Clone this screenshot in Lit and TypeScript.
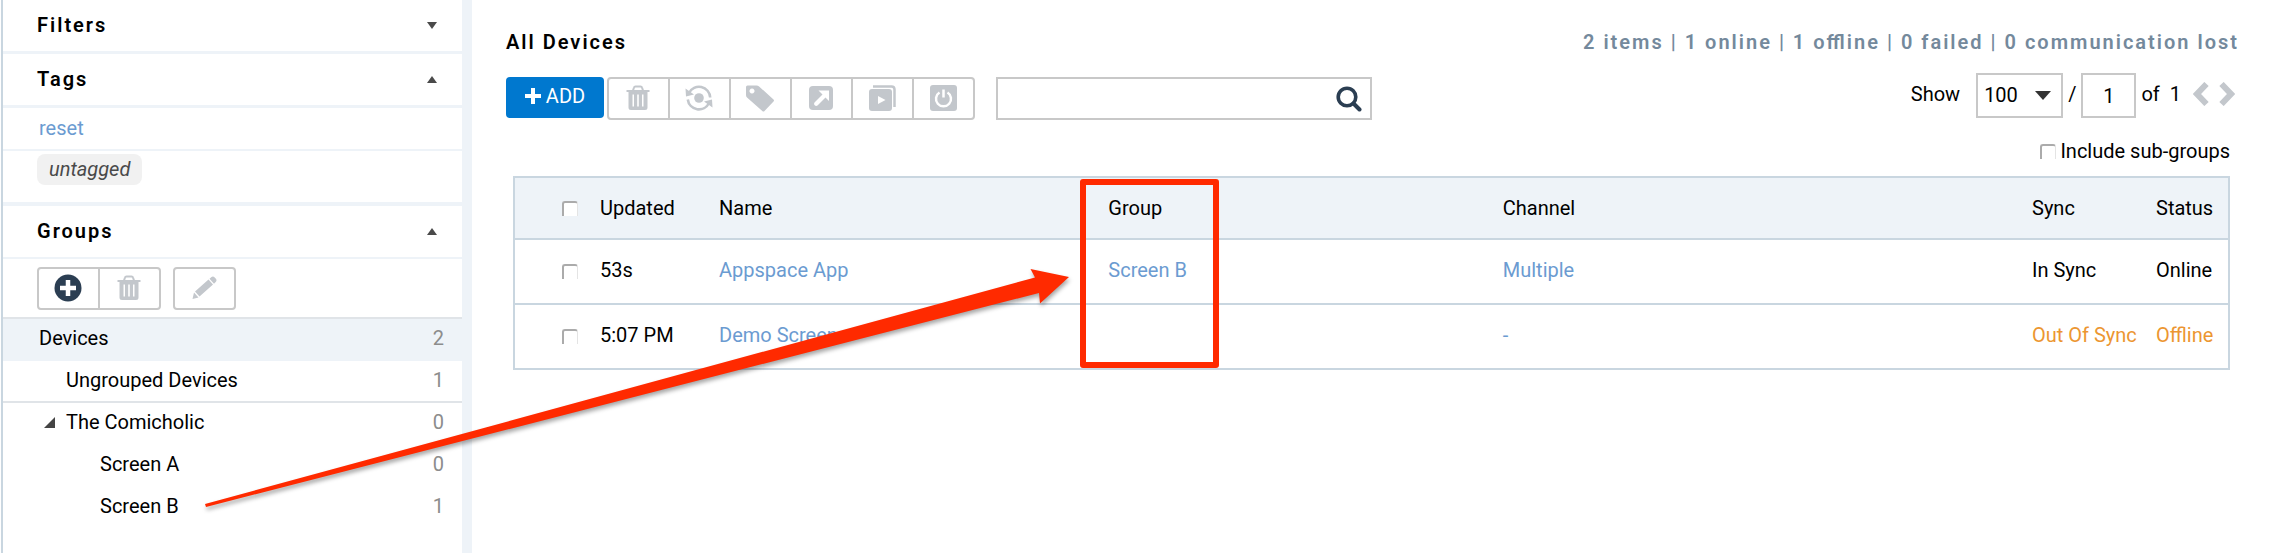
import { LitElement, html, css, svg } from "lit";
import { customElement, state } from "lit/decorators.js";

interface Device { updated: string; name: string; group: string; channel: string; sync: string; status: string; warn: boolean; }

const devices: Device[] = [
  { updated: "53s", name: "Appspace App", group: "Screen B", channel: "Multiple", sync: "In Sync", status: "Online", warn: false },
  { updated: "5:07 PM", name: "Demo Screen", group: "", channel: "-", sync: "Out Of Sync", status: "Offline", warn: true },
];

const trash = svg`<path d="M0.5 5h23v2h-23z"/><path d="M7 5.500 8 2.500Q8.300 1.500 9.500 1.500h5q1.200 0 1.500 1l1 3" fill="none" stroke="currentColor" stroke-width="2"/>
  <path fill-rule="evenodd" d="M2.500 6h19v16.500q0 2.500-2.500 2.500h-14q-2.500 0-2.500-2.500zM6.500 9.500v12h1.500v-12zM11.200 9.500v12h1.600v-12zM16 9.500v12h1.500v-12z"/>`;

const icons: Record<string, unknown> = {
  trash: html`<svg class="icon" width="24" height="26" viewBox="0 0 24 26" fill="currentColor">${trash}</svg>`,
  sync: html`<svg class="icon" width="28" height="26" viewBox="0 0 28 26" fill="none" stroke="currentColor" stroke-width="2.600">
    <circle cx="14" cy="13" r="4.800" fill="currentColor" stroke="none"/>
    <path d="M4 8A11.200 11.200 0 0 1 25.200 12.500M24 18A11.200 11.200 0 0 1 2.800 14.500"/>
    <path d="M.5 3.500 1 11.500 9 9.500zM27.500 22.500 27 14.500 19 16.500z" fill="currentColor" stroke="none"/></svg>`,
  tag: html`<svg class="icon" width="28" height="27" viewBox="0 0 28 27" fill="currentColor">
    <path fill-rule="evenodd" d="M0 2Q0 .5 1.500.5h9q1.500 0 2.600 1L27.500 14.500q1 1 0 2L18.500 26q-1 1-2.200 0L1 12.500Q0 11.500 0 10zM6 3.500a2.500 2.500 0 1 0 .01 0z"/></svg>`,
  open: html`<svg class="icon" width="24" height="24" viewBox="0 0 24 24"><rect width="24" height="24" rx="4" fill="currentColor"/>
    <path d="M9.500 4.500H20V15l-3.500-3.500-8 8q-1.500 1-2.800-.2t-.2-2.800l8-8z" fill="#fff"/></svg>`,
  play: html`<svg class="icon" width="27" height="26" viewBox="0 0 27 26" fill="currentColor">
    <rect y="4" width="23" height="22" rx="3"/><path d="M4 1.500h18.500q3 0 3 3V22" fill="none" stroke="currentColor" stroke-width="2.500"/><path d="M9 11v8l7.500-4z" fill="#fff"/></svg>`,
  power: html`<svg class="icon" width="27" height="26" viewBox="0 0 27 26"><rect width="27" height="26" rx="3" fill="currentColor"/>
    <path d="M9.500 7.500a7.500 7.500 0 1 0 8 0M13.500 4.500v8" fill="none" stroke="#fff" stroke-width="2.500"/></svg>`,
  pencil: html`<svg class="icon" width="25" height="24" viewBox="0 0 25 24" fill="currentColor">
    <path d="M.5 23 2 16.500 6.500 21.500zM3 15.500 16.500 3.500 21 8.500 7.500 20.500zM17.500 2.800 19.500 1q1.700-1 3.200.5l1.200 1.200q1.200 1.700 0 3L22 7.700z"/></svg>`,
  plus: html`<svg class="icon" width="28" height="28" viewBox="0 0 28 28"><circle cx="14" cy="14" r="13.500" fill="#2b3e52"/><path d="M14 6v16M6 14h16" stroke="#fff" stroke-width="4.500"/></svg>`,
};

@customElement("app-root")
export class AppRoot extends LitElement {
  @state() private tagsOpen = true;

  static styles = css`
    :host { display: block; min-height: 100vh; position: relative; overflow: hidden; background: #fff; color: #000;
      font: 20px/24px Roboto, sans-serif; }
    *, *::before { box-sizing: border-box; }
    button, input, select { font: inherit; color: inherit; margin: 0; padding: 0; }
    button { border: 0; background: none; display: flex; align-items: center; justify-content: center; cursor: pointer; }
    a { color: #6b9bd1; text-decoration: none; }
    h1 { margin: 0; font: inherit; }
    .icon { display: block; flex: none; }
    .shell { display: flex; min-height: 100vh; padding-left: 1px; }
    .sidebar { flex: none; width: 471px; border-left: 2px solid #c9d6e0; border-right: 10px solid #eef3f8; }
    .section { width: 100%; height: 54px; padding: 0 25px 1px 34px; border-bottom: 3px solid #eef3f8; justify-content: space-between;
      font-weight: 600; letter-spacing: 2px; }
    .section.groups { height: 53px; border-bottom-width: 2px; }
    .reset { display: block; height: 43px; padding: 8px 36px; border-bottom: 2px solid #eef3f8; }
    .tags { height: 55px; padding: 3px 34px; border-bottom: 4px solid #eef3f8; }
    .chip { display: inline-block; height: 31px; padding: 3px 12px; border-radius: 8px; background: #f1f1f1; color: #4a4a4a; font-style: italic; }
    .tools { display: flex; gap: 12px; padding: 8px 34px 7px; border-bottom: 2px solid #e0e4e8; }
    .group { display: flex; height: 43px; border: 2px solid #c8c8c8; border-radius: 4px; color: #c3c7cc; }
    .group button { width: 61px; padding: 0 1px 1px 0; border-left: 2px solid #c8c8c8; }
    .group button:first-child { width: 59px; border-left: 0; }
    .tree { list-style: none; margin: 0; padding: 0; }
    .node { display: flex; align-items: center; height: 42px; padding: 0 18px 4px 36px; }
    .node .count { margin-left: auto; color: #8c8c8c; }
    .node.selected { background: #eef3f8; }
    .node.ungrouped { padding-left: 63px; border-bottom: 2px solid #e0e4e8; padding-bottom: 2px; }
    .node.parent { padding-left: 41px; gap: 11px; }
    .node.leaf { padding-left: 97px; }
    .main { flex: 1; min-width: 0; padding: 30px 41px 0 34px; }
    .top, .bar { display: flex; justify-content: space-between; }
    .title, .summary { font-weight: 600; letter-spacing: 2px; }
    .summary { color: #74899c; font-feature-settings: "liga"; }
    .bar { margin-top: 19px; }
    .actions { display: flex; padding-top: 4px; align-items: flex-start; }
    .add { width: 98px; height: 41px; gap: 5px; padding-bottom: 4px; margin-right: 3px; border-radius: 4px; background: #0078cf; color: #fff; }
    .search { display: flex; align-items: center; width: 376px; height: 43px; margin-left: 21px; border: 2px solid #c8c8c8; padding-right: 8px; }
    .search input { flex: 1; min-width: 0; height: 100%; border: 0; outline: 0; padding: 0 8px; background: none; }
    .pager { display: flex; align-items: center; height: 45px; padding-right: 4px; }
    .pager label { margin: 0 16px 4px 0; }
    .pager .text { margin: 0 5px 4px; }
    .pager .of { display: flex; gap: 10px; margin-right: 12px; }
    .pick { display: grid; }
    .pick select, .pick svg { grid-area: 1 / 1; }
    .pick svg { align-self: center; justify-self: end; margin-right: 12px; pointer-events: none; }
    .pick select { appearance: none; width: 87px; height: 45px; padding: 0 6px 2px; border: 2px solid #c8c8c8; border-radius: 0; background: #fff; }
    .page { width: 55px; height: 45px; border: 2px solid #c8c8c8; text-align: center; }
    .step { color: #c3c7cc; padding-bottom: 3px; }
    .step + .step { margin-left: 10px; }
    .sub { display: flex; justify-content: flex-end; align-items: center; gap: 4px; padding: 19px 9px 13px 0; }
    .box { appearance: none; display: block; width: 16px; height: 15px; border: solid #ababab; border-width: 2px 0 0 2px; border-right: 1px solid #e4e4e4;
      border-radius: 3px 3px 0 0; background: #fff; }
    .devices { width: calc(100% - 16px); margin-left: 7px; table-layout: fixed; border-collapse: collapse; border: 2px solid #c9d6e0; }
    .devices th, .devices td { height: 65px; padding: 0 0 4px; text-align: left; font-weight: 400; border-top: 2px solid #c9d6e0; white-space: nowrap; }
    .devices th { height: 62px; padding: 0; background: #eef3f8; }
    .devices .box { margin: 4px 0 0 47px; }
    .devices th .box { margin-top: 0; }
    .c-check { width: 86px; } .c-updated { width: 119px; } .c-name { width: 22.7%; } .c-group { width: 23%; } .c-sync { width: 124px; } .c-status { width: 73px; }
    .warn { color: #ec9631; }
    .markup { position: absolute; top: 0; left: 0; pointer-events: none; filter: drop-shadow(1px 3px 2px rgb(0 0 0 / 35%)); }
    .frame { position: absolute; left: 1080px; top: 179px; width: 139px; height: 189px; border: 6px solid #ff2a00; border-radius: 3px; pointer-events: none; }
  `;

  private arrow(up: boolean) {
    return html`<svg width="10" height="7" viewBox="0 0 10 7"><path d=${up ? "M5 0 10 7H0z" : "M0 0H10L5 7z"} fill="#4a4a4a"/></svg>`;
  }

  private tool(name: string, label: string) {
    return html`<button aria-label=${label}>${icons[name]}</button>`;
  }

  render() {
    return html`
      <div class="shell">
        <aside class="sidebar">
          <button class="section">Filters ${this.arrow(false)}</button>
          <button class="section" aria-expanded=${this.tagsOpen} @click=${() => (this.tagsOpen = !this.tagsOpen)}>Tags ${this.arrow(this.tagsOpen)}</button>
          ${this.tagsOpen ? html`<a class="reset" href="#">reset</a><div class="tags"><span class="chip">untagged</span></div>` : ""}
          <button class="section groups">Groups ${this.arrow(true)}</button>
          <div class="tools">
            <div class="group">${this.tool("plus", "Add group")}${this.tool("trash", "Delete group")}</div>
            <div class="group">${this.tool("pencil", "Edit group")}</div>
          </div>
          <ul class="tree">
            <li class="node selected">Devices<span class="count">2</span></li>
            <li class="node ungrouped">Ungrouped Devices<span class="count">1</span></li>
            <li class="node parent"><svg width="11" height="11" viewBox="0 0 11 11"><path d="M11 0V11H0z" fill="#444"/></svg>The Comicholic<span class="count">0</span></li>
            <li class="node leaf">Screen A<span class="count">0</span></li>
            <li class="node leaf">Screen B<span class="count">1</span></li>
          </ul>
        </aside>
        <main class="main">
          <div class="top">
            <h1 class="title">All Devices</h1>
            <div class="summary">2 items | 1 online | 1 offline | 0 failed | 0 communication lost</div>
          </div>
          <div class="bar">
            <div class="actions">
              <button class="add"><svg width="16" height="16" viewBox="0 0 16 16"><path d="M8 0V16M0 8H16" stroke="#fff" stroke-width="4"/></svg>ADD</button>
              <div class="group">
                ${this.tool("trash", "Delete")}${this.tool("sync", "Sync")}${this.tool("tag", "Tag")}
                ${this.tool("open", "Move")}${this.tool("play", "Channels")}${this.tool("power", "Power")}
              </div>
              <div class="search">
                <input type="text" aria-label="Search devices" />
                <button aria-label="Search"><svg width="26" height="26" viewBox="0 0 26 26" fill="none" stroke="#2b3e52"><circle cx="11" cy="11" r="8.800" stroke-width="3.600"/><path d="M17.500 17.500 23.500 23.500" stroke-width="4" stroke-linecap="round"/></svg></button>
              </div>
            </div>
            <div class="pager">
              <label for="size">Show</label>
              <span class="pick"><select id="size"><option>100</option></select><svg width="16" height="9" viewBox="0 0 16 9"><path d="M0 0H16L8 9z" fill="#333"/></svg></span>
              <span class="text">/</span>
              <input class="page" type="text" aria-label="Page" .value=${"1"} />
              <span class="text of"><span>of</span><span>1</span></span>
              <button class="step" aria-label="Previous page"><svg width="16" height="24" viewBox="0 0 16 24"><path d="M13.500 2 4 12 13.500 22" fill="none" stroke="currentColor" stroke-width="6"/></svg></button>
              <button class="step" aria-label="Next page"><svg width="16" height="24" viewBox="0 0 16 24"><path d="M2.500 2 12 12 2.500 22" fill="none" stroke="currentColor" stroke-width="6"/></svg></button>
            </div>
          </div>
          <div class="sub"><input class="box" type="checkbox" id="subs" /><label for="subs">Include sub-groups</label></div>
          <table class="devices">
            <colgroup><col class="c-check" /><col class="c-updated" /><col class="c-name" /><col class="c-group" /><col /><col class="c-sync" /><col class="c-status" /></colgroup>
            <thead><tr><th><input class="box" type="checkbox" aria-label="Select all" /></th><th>Updated</th><th>Name</th><th>Group</th><th>Channel</th><th>Sync</th><th>Status</th></tr></thead>
            <tbody>
              ${devices.map((d) => html`<tr>
                <td><input class="box" type="checkbox" aria-label="Select ${d.name}" /></td>
                <td>${d.updated}</td><td><a href="#">${d.name}</a></td><td>${d.group ? html`<a href="#">${d.group}</a>` : ""}</td>
                <td><a href="#">${d.channel}</a></td>
                <td class=${d.warn ? "warn" : ""}>${d.sync}</td><td class=${d.warn ? "warn" : ""}>${d.status}</td></tr>`)}
            </tbody>
          </table>
        </main>
      </div>
      <svg class="markup" width="1100" height="530" viewBox="0 0 1100 530"><path d="M205 504 1035 277.500 1030.500 269 1069 277 1040 303.500 1039 293 206 507z" fill="#ff2a00"/></svg>
      <div class="frame"></div>
    `;
  }
}
